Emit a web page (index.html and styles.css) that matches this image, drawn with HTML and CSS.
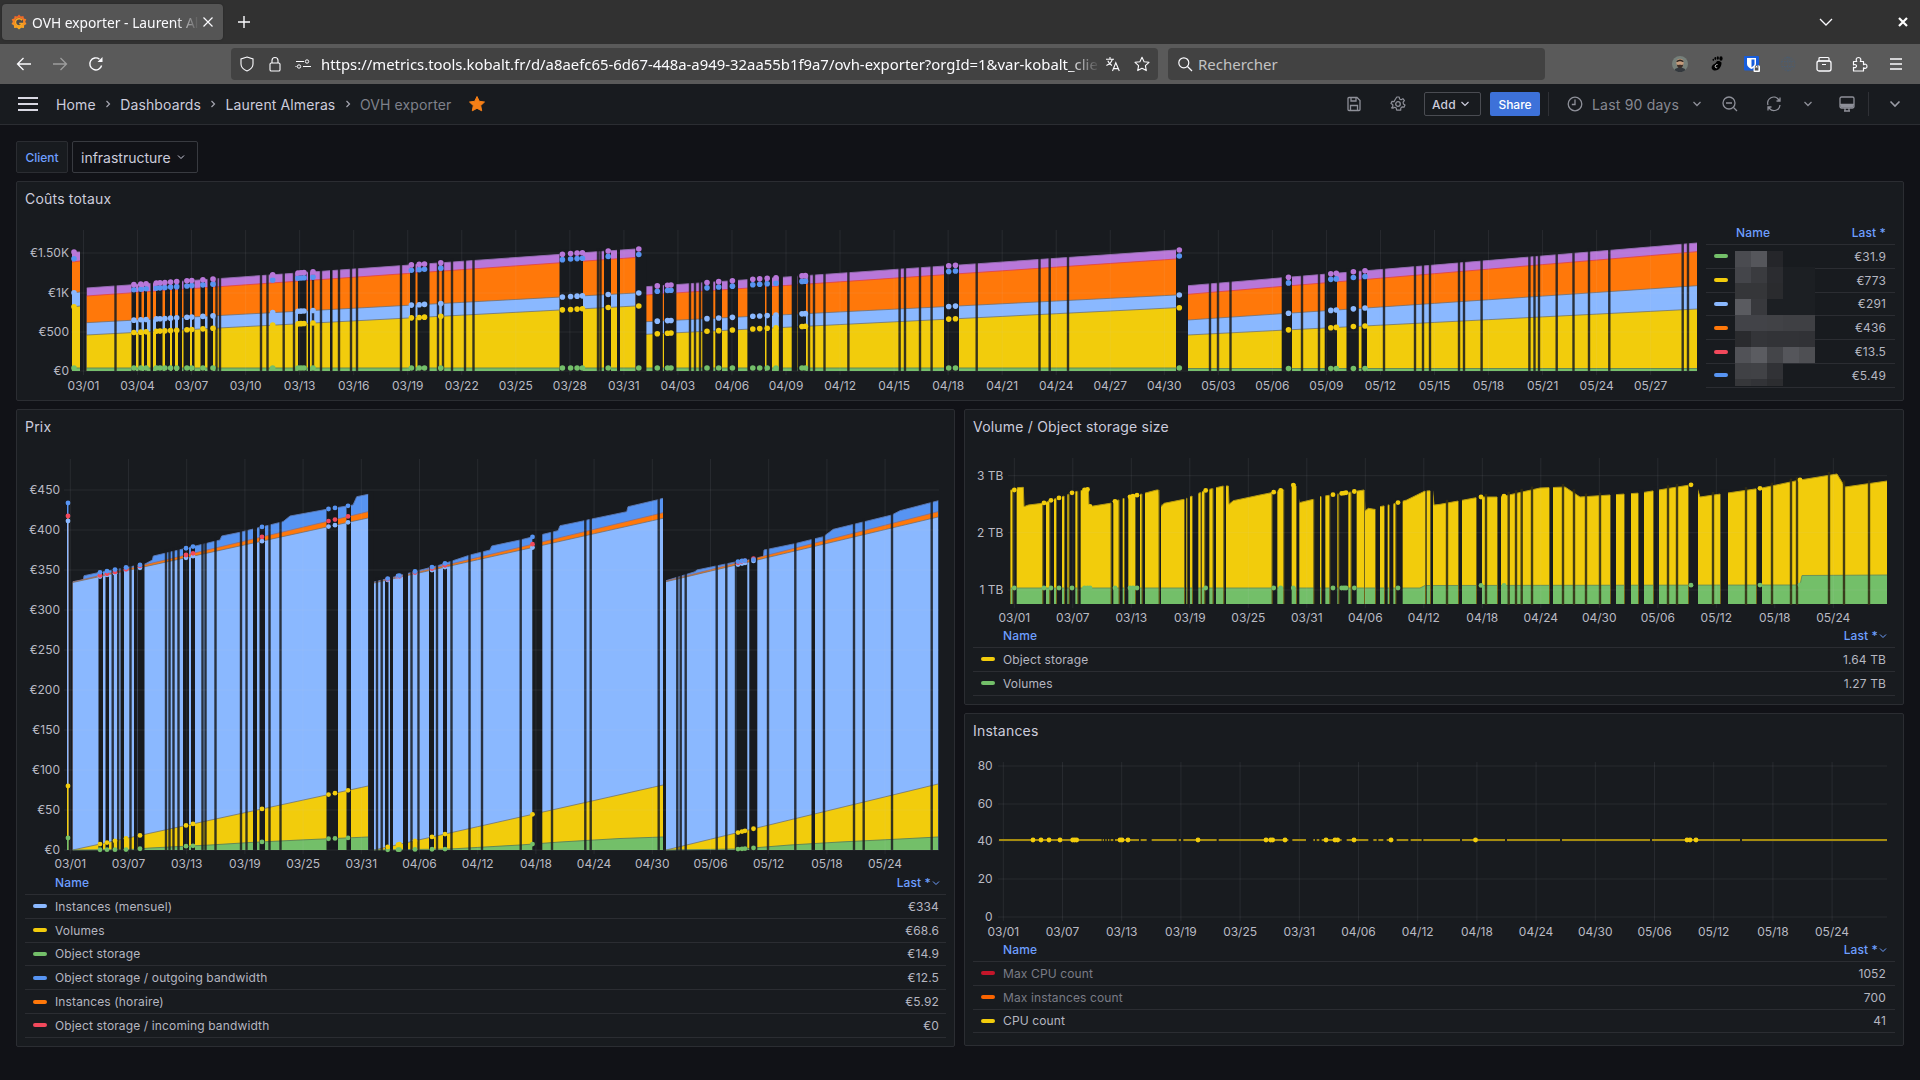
FILE: index.html
```html
<!DOCTYPE html>
<html lang="fr">
<head>
<meta charset="utf-8">
<title>OVH exporter - Laurent Almeras</title>
<link rel="stylesheet" href="styles.css">
</head>
<body>
<div class="tabbar">
  <div class="tab">
    <svg class="favicon" viewBox="0 0 16 16" width="16" height="16">
      <defs><linearGradient id="gf" x1="0" y1="1" x2="0" y2="0"><stop offset="0" stop-color="#fbb11f"/><stop offset="1" stop-color="#f05a28"/></linearGradient></defs>
      <polygon fill="url(#gf)" points="8,0.5 9.8,2.6 12.4,1.9 12.9,4.4 15.3,5.3 14.2,7.8 15.5,10 13.2,11.3 12.9,14 10.2,13.7 8,15.5 6,13.7 3.2,14 2.8,11.3 0.5,10 1.8,7.8 0.7,5.3 3.2,4.4 3.6,1.9 6.2,2.6"/>
      <circle cx="8" cy="8" r="4.2" fill="#4c4c4c"/>
      <path d="M11 6.2A3.6 3.6 0 1 0 11.4 9.6H8.2" fill="none" stroke="#f9a825" stroke-width="1.5"/>
    </svg>
    <span class="tab-title">OVH exporter - Laurent Al</span>
    <svg class="tab-close" viewBox="0 0 16 16" width="16" height="16"><path d="M3.5 3.5l9 9M12.5 3.5l-9 9" stroke="#fbfbfe" stroke-width="1.2" fill="none"/></svg>
  </div>
  <svg class="newtab" viewBox="0 0 16 16" width="16" height="16"><path d="M8 2v12M2 8h12" stroke="#fbfbfe" stroke-width="1.4" fill="none"/></svg>
  <div class="winctl">
    <svg viewBox="0 0 16 16" width="16" height="16"><path d="M2 5l6 6 6-6" stroke="#fbfbfe" stroke-width="1.3" fill="none"/></svg>
    <svg class="winclose" viewBox="0 0 16 16" width="16" height="16"><path d="M4 4l8 8M12 4l-8 8" stroke="#fff" stroke-width="2.2" fill="none"/></svg>
  </div>
</div>

<div class="toolbar">
  <span class="tb-cell"><svg viewBox="0 0 16 16" width="16" height="16"><path d="M15 8H1.5M7.5 2L1.5 8l6 6" stroke="#fbfbfe" stroke-width="1.3" fill="none"/></svg></span>
  <span class="tb-cell"><svg viewBox="0 0 16 16" width="16" height="16"><path d="M1 8h13.5M8.5 2l6 6-6 6" stroke="#9d9d9d" stroke-width="1.3" fill="none"/></svg></span>
  <span class="tb-cell"><svg viewBox="0 0 16 16" width="16" height="16"><path d="M13.6 9.5A6 6 0 1 1 11.5 3.2" stroke="#fbfbfe" stroke-width="1.4" fill="none"/><path d="M14.5 1v5h-5" fill="#fbfbfe"/></svg></span>
  <div class="urlbar">
    <span class="url-icon"><svg viewBox="0 0 16 16" width="16" height="16"><path d="M8 1l6 2v5c0 3.4-2.6 5.6-6 7-3.4-1.4-6-3.6-6-7V3z" stroke="#fbfbfe" stroke-width="1.1" fill="none"/></svg></span>
    <span class="url-icon"><svg viewBox="0 0 16 16" width="16" height="16"><rect x="3" y="7" width="10" height="8" rx="1.3" stroke="#fbfbfe" stroke-width="1.1" fill="none"/><path d="M5 7V4.5a3 3 0 0 1 6 0V7" stroke="#fbfbfe" stroke-width="1.1" fill="none"/></svg></span>
    <span class="url-icon"><svg viewBox="0 0 16 16" width="16" height="16"><path d="M1 5.5h8M1.5 10.5h-1M8 10.5h8" stroke="#fbfbfe" stroke-width="1.1" fill="none"/><circle cx="12" cy="5.5" r="1.7" stroke="#fbfbfe" fill="none"/><circle cx="4" cy="10.5" r="1.7" stroke="#fbfbfe" fill="none"/></svg></span>
    <span class="url-text">https://metrics.tools.kobalt.fr/d/a8aefc65-6d67-448a-a949-32aa55b1f9a7/ovh-exporter?orgId=1&amp;var-kobalt_clie</span>
    <span class="url-icon trans"><svg viewBox="0 0 16 16" width="16" height="16"><path d="M1 3.2h8M5 1v2.2M7.3 3.2C6.8 6 4.6 8.2 1.4 9.5M2.8 4.8c.8 2 2.2 3.6 4.2 4.7M7.5 15l3.3-8.3L14.3 15M8.6 12.6h4.6" stroke="#fbfbfe" stroke-width="1.1" fill="none"/></svg></span>
    <span class="url-icon star"><svg viewBox="0 0 16 16" width="16" height="16"><path d="M8 1.2l2.1 4.5 4.9.6-3.6 3.4.9 4.9L8 12.2l-4.3 2.4.9-4.9L1 6.3l4.9-.6z" stroke="#fbfbfe" stroke-width="1.1" fill="none" stroke-linejoin="round"/></svg></span>
  </div>
  <div class="searchbar">
    <svg viewBox="0 0 16 16" width="16" height="16"><circle cx="6.8" cy="6.8" r="5" stroke="#fbfbfe" stroke-width="1.2" fill="none"/><path d="M10.5 10.5l4.5 4.5" stroke="#fbfbfe" stroke-width="1.2"/></svg>
    <span>Rechercher</span>
  </div>
  <div class="ext-icons">
    <span class="tb-cell"><svg viewBox="0 0 16 16" width="16" height="16"><circle cx="8" cy="8" r="8" fill="#76807a"/><ellipse cx="8" cy="7" rx="3.6" ry="4.2" fill="#c59c7c"/><path d="M4.4 6c0-3.5 7.2-3.5 7.2 0l-1 .1c-1-1.2-4.2-1.2-5.2 0z" fill="#2b2522"/><path d="M4.8 8c.6 1 1 1 1.4.9.8-.3 2.8-.3 3.6 0 .4.1.8.1 1.4-.9-.2 3-1.6 4.4-3.2 4.4S5 11 4.8 8z" fill="#3a2e28"/><path d="M2.5 14c1-1.800 3-2.200 5.500-2.200s4.500.4 5.500 2.200a8 8 0 0 1-11 0z" fill="#33383d"/></svg></span>
    <span class="tb-cell"><svg viewBox="0 0 16 16" width="16" height="16"><path d="M13.500 6.500c.3 3.500-2.200 8-6.500 8-3 0-4-2.500-3-4.500 1-1.800 3.600-2.300 4.200-3.700.7-1.600 3-1.800 5.300.2z" fill="#000"/><ellipse cx="13" cy="2.500" rx="1.600" ry="2.300" fill="#000"/><ellipse cx="9.800" cy="2" rx="1.100" ry="1.800" fill="#000"/><ellipse cx="7.300" cy="2.500" rx=".9" ry="1.400" fill="#000"/><ellipse cx="5.300" cy="3.800" rx=".8" ry="1.100" fill="#000"/><path d="M9.500 8.500c-1.500 0-2.500 1-2.300 2.300.2 1 1.300 1.200 2 .7" stroke="#fff" stroke-width=".8" fill="none"/></svg></span>
    <span class="tb-cell"><svg viewBox="0 0 16 16" width="16" height="16"><rect width="15" height="14.500" rx="1" fill="#175ddc"/><path d="M3 2h9v6c0 2.500-2.500 4-4.500 5C5.500 12 3 10.500 3 8z" fill="#fff"/><path d="M7.500 3.500H10.500V8c0 1.300-1.500 2.400-3 3.200z" fill="#175ddc"/><rect x="9.500" y="9.500" width="6.500" height="6.500" rx="1" fill="#fff"/><path d="M11.300 11.500V10.800a1.300 1.300 0 0 1 2.600 0v.7" stroke="#555" fill="none"/><rect x="10.800" y="11.500" width="3.600" height="3" fill="#555"/></svg></span>
    <span class="tb-cell"><svg viewBox="0 0 16 16" width="16" height="16" class="globe"><circle cx="8" cy="8" r="6.800" stroke="#4c5d70" fill="none" stroke-dasharray="1.500 1"/><ellipse cx="8" cy="8" rx="3.200" ry="6.800" stroke="#4c5d70" fill="none" stroke-dasharray="1.500 1"/><path d="M1.500 5.500h13M1.500 10.500h13M8 1v14" stroke="#4c5d70" stroke-dasharray="1.500 1" fill="none"/></svg></span>
    <span class="tb-cell"><svg viewBox="0 0 16 16" width="16" height="16"><rect x="1" y="5" width="14" height="10" rx="2" stroke="#fbfbfe" stroke-width="1.300" fill="none"/><path d="M3 2.500a1 1 0 0 1 1-1h8a1 1 0 0 1 1 1V5H3zM6 8.500h4" stroke="#fbfbfe" stroke-width="1.200" fill="none"/></svg></span>
    <span class="tb-cell"><svg viewBox="0 0 16 16" width="16" height="16"><path d="M1.500 5.500h3.200c-1-1.300-.7-4 1.800-4s2.800 2.700 1.800 4h3.200v3.200c1.300-1 3.500-.7 3.500 1.500s-2.200 2.600-3.500 1.600v3.200H1.500v-3.700c1.600 1 3-.2 3-1.200s-1.400-2.200-3-1.200z" stroke="#fbfbfe" stroke-width="1.200" fill="none" stroke-linejoin="round"/></svg></span>
    <span class="tb-cell"><svg viewBox="0 0 16 16" width="16" height="16"><path d="M2 3h12M2 8h12M2 13h12" stroke="#fbfbfe" stroke-width="1.300" fill="none"/></svg></span>
  </div>
</div>

<nav class="gnav">
  <svg class="burger" viewBox="0 0 20 16" width="20" height="16"><path d="M0 2h20M0 8h20M0 14h20" stroke="#d8d8e2" stroke-width="2" fill="none"/></svg>
  <div class="crumbs">
    <span>Home</span><span class="sep"><svg viewBox="0 0 8 10" width="8" height="10"><path d="M2.500 2l3 3-3 3" stroke="#a5a6b0" stroke-width="1.200" fill="none"/></svg></span>
    <span>Dashboards</span><span class="sep"><svg viewBox="0 0 8 10" width="8" height="10"><path d="M2.500 2l3 3-3 3" stroke="#a5a6b0" stroke-width="1.200" fill="none"/></svg></span>
    <span>Laurent Almeras</span><span class="sep"><svg viewBox="0 0 8 10" width="8" height="10"><path d="M2.500 2l3 3-3 3" stroke="#a5a6b0" stroke-width="1.200" fill="none"/></svg></span>
    <span class="current">OVH exporter</span>
  </div>
  <svg class="fav" viewBox="0 0 16 16" width="16" height="16"><path d="M8 .5l2.300 4.800 5.200.7-3.800 3.600 1 5.200L8 12.300l-4.700 2.500 1-5.200L.5 6l5.200-.7z" fill="#f57f17" stroke="#f57f17" stroke-linejoin="round"/></svg>
  <div class="actions">
    <svg class="ic" viewBox="0 0 16 16" width="16" height="16"><path d="M2 2.500a1 1 0 0 1 1-1h8l3 3v9a1 1 0 0 1-1 1H3a1 1 0 0 1-1-1zM5 1.500v3.500h5V1.500M4.500 14.500v-5h7v5" stroke="#8e9099" stroke-width="1.300" fill="none"/></svg>
    <svg class="ic gear" viewBox="0 0 16 16" width="16" height="16"><circle cx="8" cy="8" r="2.300" stroke="#8e9099" stroke-width="1.300" fill="none"/><path d="M6.800 1h2.400l.4 2 1.500.7 1.800-1 1.500 2-1.300 1.500.3 1.800 1.600 1-1 2.200-2-.3-1.200 1.200-.1 2H6.700l-.5-2-1.400-.8-1.900.8L1.600 11.900l1.300-1.500-.2-1.900-1.700-1 1-2.200 2 .3L5.200 3.500z" stroke="#8e9099" stroke-width="1.200" fill="none" stroke-linejoin="round"/></svg>
    <button class="btn-add">Add<svg viewBox="0 0 10 10" width="10" height="10"><path d="M1.500 3l3.500 3.500L8.500 3" stroke="#ccccdc" stroke-width="1.200" fill="none"/></svg></button>
    <button class="btn-share">Share</button>
    <span class="vline v1"></span>
    <svg class="ic clock" viewBox="0 0 16 16" width="16" height="16"><circle cx="8" cy="8" r="6.800" stroke="#8e9099" stroke-width="1.300" fill="none"/><path d="M8 3.500V8.500H4.800" stroke="#8e9099" stroke-width="1.300" fill="none"/></svg>
    <span class="range">Last 90 days</span>
    <svg class="ch c1" viewBox="0 0 10 10" width="10" height="10"><path d="M1.500 3l3.500 3.500L8.500 3" stroke="#8e9099" stroke-width="1.300" fill="none"/></svg>
    <svg class="ic zoom" viewBox="0 0 16 16" width="16" height="16"><circle cx="7" cy="7" r="6" stroke="#8e9099" stroke-width="1.300" fill="none"/><path d="M4 7h6M11.500 11.500l3.500 3.500" stroke="#8e9099" stroke-width="1.300" fill="none"/></svg>
    <svg class="ic refresh" viewBox="0 0 16 16" width="16" height="16"><path d="M2 9a6 6 0 0 1 10.500-5.500L14 5M14 9a6 6 0 0 1-10.500 3.500L2 11M14 1.500V5h-3.500M2 14.500V11h3.500" stroke="#8e9099" stroke-width="1.300" fill="none"/></svg>
    <svg class="ch c2" viewBox="0 0 10 10" width="10" height="10"><path d="M1.500 3l3.500 3.500L8.500 3" stroke="#8e9099" stroke-width="1.300" fill="none"/></svg>
    <svg class="ic monitor" viewBox="0 0 16 16" width="16" height="16"><rect x="1" y="1" width="14" height="11" rx="1.500" stroke="#8e9099" stroke-width="1.300" fill="none"/><path d="M1 8.500h14M5 15h6M6 12v3M10 12v3" stroke="#8e9099" stroke-width="1.300" fill="none"/><rect x="1.500" y="8.500" width="13" height="3" fill="#8e9099"/></svg>
    <span class="vline v2"></span>
    <svg class="ch c3" viewBox="0 0 12 12" width="12" height="12"><path d="M1.500 3.500L6 8l4.500-4.500" stroke="#9a9ca5" stroke-width="1.600" fill="none"/></svg>
  </div>
</nav>

<main class="dash">
  <div class="vars">
    <label class="var-label">Client</label>
    <div class="var-select">infrastructure<svg viewBox="0 0 10 10" width="10" height="10"><path d="M2 3.500l3 3 3-3" stroke="#ccccdc" fill="none"/></svg></div>
  </div>

  <section class="panel p-total">
    <h2 class="ptitle">Coûts totaux</h2>
    <div class="total-body">
      <div class="viz" data-chart="total"></div>
      <div class="legend side">
        <div class="lhead"><span class="lname">Name</span><span class="llast">Last *</span></div>
        <div class="lrow"><i class="sw green"></i><span class="lbl"></span><span class="val">€31.9</span></div>
        <div class="lrow"><i class="sw yellow"></i><span class="lbl"></span><span class="val">€773</span></div>
        <div class="lrow"><i class="sw sky"></i><span class="lbl"></span><span class="val">€291</span></div>
        <div class="lrow"><i class="sw orange"></i><span class="lbl"></span><span class="val">€436</span></div>
        <div class="lrow"><i class="sw red"></i><span class="lbl"></span><span class="val">€13.5</span></div>
        <div class="lrow"><i class="sw blue"></i><span class="lbl"></span><span class="val">€5.49</span></div>
        <svg class="mosaic" data-mosaic viewBox="0 0 80 135" width="80" height="135"></svg>
      </div>
    </div>
  </section>

  <div class="row">
    <section class="panel p-prix">
      <h2 class="ptitle">Prix</h2>
      <div class="viz" data-chart="prix"></div>
      <div class="legend">
        <div class="lhead"><span class="lname">Name</span><span class="llast">Last *<svg viewBox="0 0 10 10" width="10" height="10"><path d="M2 3.500l3 3 3-3" stroke="#6e9fff" fill="none"/></svg></span></div>
        <div class="lrow"><i class="sw sky"></i><span class="lbl">Instances (mensuel)</span><span class="val">€334</span></div>
        <div class="lrow"><i class="sw yellow"></i><span class="lbl">Volumes</span><span class="val">€68.6</span></div>
        <div class="lrow"><i class="sw green"></i><span class="lbl">Object storage</span><span class="val">€14.9</span></div>
        <div class="lrow"><i class="sw blue"></i><span class="lbl">Object storage / outgoing bandwidth</span><span class="val">€12.5</span></div>
        <div class="lrow"><i class="sw orange"></i><span class="lbl">Instances (horaire)</span><span class="val">€5.92</span></div>
        <div class="lrow"><i class="sw red"></i><span class="lbl">Object storage / incoming bandwidth</span><span class="val">€0</span></div>
      </div>
    </section>
    <div class="col">
      <section class="panel p-vol">
        <h2 class="ptitle">Volume / Object storage size</h2>
        <div class="viz" data-chart="vol"></div>
        <div class="legend">
          <div class="lhead"><span class="lname">Name</span><span class="llast">Last *<svg viewBox="0 0 10 10" width="10" height="10"><path d="M2 3.500l3 3 3-3" stroke="#6e9fff" fill="none"/></svg></span></div>
          <div class="lrow"><i class="sw yellow"></i><span class="lbl">Object storage</span><span class="val">1.64 TB</span></div>
          <div class="lrow"><i class="sw green"></i><span class="lbl">Volumes</span><span class="val">1.27 TB</span></div>
        </div>
      </section>
      <section class="panel p-inst">
        <h2 class="ptitle">Instances</h2>
        <div class="viz" data-chart="inst"></div>
        <div class="legend">
          <div class="lhead"><span class="lname">Name</span><span class="llast">Last *<svg viewBox="0 0 10 10" width="10" height="10"><path d="M2 3.500l3 3 3-3" stroke="#6e9fff" fill="none"/></svg></span></div>
          <div class="lrow dim"><i class="sw crimson"></i><span class="lbl">Max CPU count</span><span class="val">1052</span></div>
          <div class="lrow dim"><i class="sw redorange"></i><span class="lbl">Max instances count</span><span class="val">700</span></div>
          <div class="lrow"><i class="sw yellow"></i><span class="lbl">CPU count</span><span class="val">41</span></div>
        </div>
      </section>
    </div>
  </div>
</main>
<script src="chart.js"></script>
</body>
</html>
```
FILE: styles.css
```css
* { box-sizing: border-box; }
html, body { margin: 0; height: 1080px; overflow: hidden; }
body { background: #111217; font-family: Inter, "Liberation Sans", sans-serif; color: #ccccdc; }
svg { display: block; flex: none; }

.tabbar { height: 44px; background: #313131; display: flex; align-items: center; padding-left: 2px; font-family: "Noto Sans", sans-serif; }
.tab { width: 221px; height: 36px; background: #555; border-radius: 4px; display: flex; align-items: center; padding-left: 9px; position: relative; box-shadow: 0 0 2px rgba(0,0,0,.3); }
.tab-title { margin-left: 5px; width: 167px; font-size: 13.8px; white-space: nowrap; color: #fbfbfe; -webkit-mask-image: linear-gradient(to right, #000 86%, transparent); mask-image: linear-gradient(to right, #000 86%, transparent); }
.tab-close { margin-left: 1px; }
.newtab { margin-left: 13px; }
.winctl { margin-left: auto; display: flex; align-items: center; padding-right: 9px; }
.winclose { margin-left: 61px; }

.toolbar { height: 40px; background: #5a5a5a; display: flex; align-items: center; padding-left: 6px; font-family: "Noto Sans", sans-serif; }
.tb-cell { width: 36px; height: 32px; display: flex; align-items: center; justify-content: center; }
.urlbar { margin-left: 117px; width: 927px; height: 32px; background: #424242; border-radius: 4px; display: flex; align-items: center; padding-left: 2px; }
.url-icon { width: 28px; height: 32px; display: flex; align-items: center; justify-content: center; flex: none; }
.url-text { margin-left: 4px; width: 779px; flex: none; font-size: 14.88px; white-space: nowrap; color: #fbfbfe; -webkit-mask-image: linear-gradient(to right, #000 96%, transparent); mask-image: linear-gradient(to right, #000 96%, transparent); }
.url-icon.trans { margin-left: -1px; }
.url-icon.star { margin-left: 1px; }
.searchbar { margin-left: 10px; width: 377px; height: 32px; background: #424242; border-radius: 4px; display: flex; align-items: center; padding-left: 9px; gap: 5px; font-size: 15px; color: #c3c3c3; }
.ext-icons { margin-left: 117px; display: flex; }

.gnav { height: 41px; background: #181b1f; border-bottom: 1px solid #2b2d32; display: flex; align-items: center; padding-left: 18px; font-size: 14px; color: #ccccdc; }
.crumbs { margin-left: 18px; display: flex; align-items: center; letter-spacing: .12px; }
.crumbs .sep { width: 24.5px; display: flex; justify-content: center; }
.crumbs .current { color: #7f818b; }
.fav { margin-left: 18px; }
.actions { position: relative; margin-left: auto; display: flex; align-items: center; padding-right: 19px; }
.gear { margin-left: 28px; }
.btn-add { margin-left: 18px; width: 57px; height: 24px; background: transparent; border: 1px solid #4a4c52; border-radius: 2px; color: #ccccdc; font: 500 12px Inter, sans-serif; letter-spacing: .15px; display: flex; align-items: center; gap: 4px; padding: 0 0 0 7px; }
.btn-share { margin-left: 9px; width: 50px; height: 24px; background: #3d71d9; border: 0; border-radius: 2px; color: #fff; font: 500 12px Inter, sans-serif; padding: 0; }
.vline { width: 1px; height: 24px; background: #2f3136; }
.v1 { margin-left: 8px; }
.clock { margin-left: 18px; }
.range { margin-left: 9px; width: 88px; white-space: nowrap; color: #868891; font-size: 14px; letter-spacing: .2px; }
.c1 { margin-left: 12px; }
.zoom { margin-left: 20px; }
.refresh { margin-left: 28px; }
.c2 { margin-left: 21px; }
.monitor { margin-left: 26px; }
.v2 { margin-left: 13px; }
.c3 { margin-left: 20px; }

.dash { padding: 16px 16px 0; }
.vars { display: flex; gap: 4px; height: 32px; margin-bottom: 8px; }
.var-label { width: 52px; background: #181b1f; border: 1px solid #2b2d32; border-radius: 2px; font-size: 12px; font-weight: 500; color: #6e9fff; display: flex; align-items: center; justify-content: center; }
.var-select { width: 126px; border: 1px solid #383a40; border-radius: 2px; font-size: 14px; display: flex; align-items: center; padding-left: 8px; gap: 5px; }

.panel { background: #181b1f; border: 1px solid #2b2d32; border-radius: 2px; }
.ptitle { margin: 0; height: 33px; padding-left: 8px; font-size: 14px; font-weight: 400; line-height: 34px; letter-spacing: .2px; color: #ccccdc; }
.p-total { height: 220px; margin-bottom: 8px; }
.total-body { display: flex; padding-right: 8px; }
.row { display: grid; grid-template-columns: 939px 940px; column-gap: 9px; }
.p-prix { height: 638px; }
.col { display: flex; flex-direction: column; gap: 8px; }
.p-vol { height: 296px; }
.p-inst { height: 333px; }

.axis { font: 12px Inter, sans-serif; fill: #b9bac3; }

.legend { margin: 0 8px; font-size: 12px; letter-spacing: .13px; position: relative; }
.legend.side { margin: 7px 0 0 4px; width: 189px; flex: none; }
.lhead { height: 23px; display: flex; justify-content: space-between; align-items: center; padding: 0 7px 1px 30px; color: #6e9fff; font-weight: 500; border-bottom: 1px solid #2b2d32; }
.llast { display: flex; align-items: center; }
.side .lhead { padding-right: 9px; }
.lrow { height: 23.8px; display: flex; align-items: center; border-bottom: 1px solid #2b2d32; padding: 0 9px 0 8px; color: #b5b6c0; }
.p-prix .lhead { padding-right: 5px; }
.p-prix .lrow { padding-right: 7px; }
.lrow.dim .lbl { color: #7a7c86; }
.lbl { flex: 1; margin-left: 8px; }
.val { color: #b5b6c0; }
.sw { width: 14px; height: 4px; border-radius: 2px; }
.green { background: #73bf69; }
.yellow { background: #f2cc0c; }
.sky { background: #8ab8ff; }
.orange { background: #ff780a; }
.red { background: #f2495c; }
.blue { background: #5794f2; }
.crimson { background: #c4162a; }
.redorange { background: #fa6400; }
.mosaic { position: absolute; left: 29px; top: 29px; }
```
FILE: chart.js
```js
(function () {
  var NS = 'http://www.w3.org/2000/svg';
  var C = { green: '#73bf69', yellow: '#f2cc0c', sky: '#8ab8ff', orange: '#ff780a', red: '#f2495c', blue: '#5794f2', purple: '#b877d9' };
  var BG = '#181b1f';

  function el(parent, tag, attrs, text) {
    var n = document.createElementNS(NS, tag);
    for (var k in attrs) n.setAttribute(k, attrs[k]);
    if (text !== undefined) n.textContent = text;
    parent.appendChild(n);
    return n;
  }

  function dates(list) { return list.split(' '); }
  var D3 = dates('03/01 03/04 03/07 03/10 03/13 03/16 03/19 03/22 03/25 03/28 03/31 04/03 04/06 04/09 04/12 04/15 04/18 04/21 04/24 04/27 04/30 05/03 05/06 05/09 05/12 05/15 05/18 05/21 05/24 05/27');
  var D6 = dates('03/01 03/07 03/13 03/19 03/25 03/31 04/06 04/12 04/18 04/24 04/30 05/06 05/12 05/18 05/24');

  function topAt(band, x) {
    var best = null, bestDist = 1e9;
    band.segs.forEach(function (pts) {
      var a = pts[0][0], b = pts[pts.length - 1][0];
      var d = x < a ? a - x : x > b ? x - b : 0;
      if (d < bestDist) { bestDist = d; best = pts; }
    });
    var p = best;
    if (x <= p[0][0]) return p[0][1];
    for (var i = 1; i < p.length; i++) {
      if (x <= p[i][0]) {
        var t = (x - p[i - 1][0]) / (p[i][0] - p[i - 1][0]);
        return p[i - 1][1] + t * (p[i][1] - p[i - 1][1]);
      }
    }
    return p[p.length - 1][1];
  }

  function draw(cfg) {
    var host = document.querySelector('[data-chart="' + cfg.id + '"]');
    var svg = el(host, 'svg', { width: cfg.w, height: cfg.h, viewBox: cfg.x + ' ' + cfg.y + ' ' + cfg.w + ' ' + cfg.h });
    var base = cfg.base;
    var bands = cfg.bands || [];

    for (var i = bands.length - 1; i >= 0; i--) {
      bands[i].segs.forEach(function (pts, idx) {
        var s = pts.map(function (p) { return p[0] + ',' + p[1]; }).join(' ');
        var a = pts[0][0], b = pts[pts.length - 1][0];
        el(svg, 'polygon', { points: a + ',' + base + ' ' + s + ' ' + b + ',' + base, fill: bands[this.i].color });
        el(svg, 'polyline', { points: s, fill: 'none', stroke: bands[this.i].line || 'rgba(110,110,110,.75)', 'stroke-width': 1 });
      }, { i: i });
    }

    var topBand = bands[bands.length - 1];
    (cfg.gaps || []).forEach(function (g) {
      var a = Array.isArray(g) ? g[0] : g - 1.2;
      var b = Array.isArray(g) ? g[1] : g + 1.2;
      var y = Math.min(topAt(topBand, a), topAt(topBand, b)) - 3;
      var thin = !Array.isArray(g);
      el(svg, 'rect', { x: a, y: y, width: b - a, height: base - y + 1, fill: thin ? (cfg.thin || 'rgba(24,27,31,.86)') : BG });
      if (!thin && cfg.edge) {
        el(svg, 'rect', { x: a, y: topAt(topBand, a), width: 1, height: base - topAt(topBand, a), fill: cfg.edge });
      }
    });

    var gridStroke = 'rgba(204,204,220,.085)';
    cfg.yticks.forEach(function (t) {
      el(svg, 'line', { x1: cfg.gridL, x2: cfg.gridR, y1: t[1], y2: t[1], stroke: gridStroke });
    });
    cfg.labels.forEach(function (lab, k) {
      var x = cfg.x0 + k * cfg.step;
      el(svg, 'line', { x1: x, x2: x, y1: cfg.gridT, y2: cfg.gridB, stroke: gridStroke });
    });

    if (cfg.line) {
      el(svg, 'line', { x1: cfg.line.a, x2: cfg.line.b, y1: cfg.line.y, y2: cfg.line.y, stroke: '#a68c10', 'stroke-width': 2 });
      cfg.line.breaks.forEach(function (b) {
        el(svg, 'rect', { x: b[0], y: cfg.line.y - 2, width: b[1] - b[0], height: 4, fill: BG });
      });
      cfg.line.dots.forEach(function (x) {
        el(svg, 'circle', { cx: x, cy: cfg.line.y, r: 2.4, fill: C.yellow });
      });
    }

    (cfg.dots || []).forEach(function (x) {
      bands.forEach(function (b) {
        if (b.noDot) return;
        el(svg, 'circle', { cx: x, cy: topAt(b, x) + (b.dotOff || 0), r: cfg.dotR || 2.4, fill: b.dot || b.color });
      });
    });

    cfg.yticks.forEach(function (t) {
      el(svg, 'text', { x: cfg.yLabelR, y: t[1] + 4, 'text-anchor': 'end', class: 'axis' }, t[0]);
    });
    cfg.labels.forEach(function (lab, k) {
      el(svg, 'text', { x: cfg.x0 + k * cfg.step, y: cfg.xLabelY, 'text-anchor': 'middle', class: 'axis' }, lab);
    });
  }

  /* ---- Coûts totaux ---- */
  draw({
    id: 'total', x: 17, y: 215, w: 1685, h: 180, base: 371, dotR: 2.8,
    x0: 83.5, step: 54.04, labels: D3.slice(0, 30),
    gridL: 71, gridR: 1697, gridT: 230, gridB: 375, yLabelR: 69, xLabelY: 390,
    yticks: [['€1.50K', 253], ['€1K', 293], ['€500', 332], ['€0', 371]],
    bands: [
      { color: C.green, line: 'rgba(90,130,90,.9)', segs: [[[72, 368], [80, 368]], [[86.5, 368], [635.5, 368]], [[646, 368], [1176, 368]], [[1188, 368.500], [1697, 368.500]]] },
      { color: C.yellow, segs: [[[72, 307], [80, 306]], [[86.5, 335], [635.5, 306]], [[646, 334.300], [1176, 307.700]], [[1188, 335], [1697, 309]]] },
      { color: C.sky, segs: [[[72, 293], [80, 292]], [[86.5, 322.700], [635.5, 293]], [[646, 321.700], [1176, 295]], [[1188, 320], [1697, 285.700]]] },
      { color: C.orange, dot: C.blue, dotOff: -3, line: 'rgba(226,70,70,.9)', segs: [[[72, 262], [80, 261]], [[86.5, 296], [635.5, 257.500]], [[646, 295], [1176, 259]], [[1188, 294.300], [1697, 251.700]]] },
      { color: C.purple, line: 'rgba(150,110,180,.9)', segs: [[[72, 252], [80, 252]], [[86.5, 288], [635.5, 249]], [[646, 286.700], [1176, 250]], [[1188, 285.700], [1697, 243]]] }
    ],
    gaps: [[80.4, 86.5], 115.5, [131.5, 136], [138.5, 141.5], [144, 147], [150.5, 153], [156, 162.5], [165, 170], [172, 175], [178, 182], [183.5, 190], [192, 194.5], [200.5, 205], [207.5, 213], 216.5, 220,
      261, 267.5, 283.7, 294, [298, 306.5], [308, 310], 313, 321, [330, 332.5], 339, 351, 357, 401, [410, 415.5], [417.5, 429.5], 438, 443, 452, 465, 473.5, [559.5, 583], 598, 600.5, [604, 611], [617, 620],
      [635.5, 646.4], [652.5, 662.8], [664, 676.4], 690, 695, 700, [702.3, 713.3], [715.3, 722], [727.6, 738], [747.4, 765], [766.5, 772], [778.8, 782.9], [791.7, 797.2], [797.5, 806], 809, 814, 824.5, 848.4, 899.6, 905, 920, 931.6, [944, 959], 976.7, 1039.5, 1049.7, 1068, [1176, 1188],
      1210, 1218, 1230.5, [1281.7, 1292], 1302, 1319, [1324.7, 1337], [1346.5, 1358.8], [1361.5, 1367], 1384, 1415, 1423, 1430, 1459, 1464, 1481.6, 1529.4, 1534.5, 1539, 1556.7, 1573.5, 1589, 1609.3, 1682.7, 1688],
    dots: [74, 133.9, 140.8, 146.1, 156.3, 160, 164.9, 170.6, 176.7, 186.9, 191.8, 202.9, 213, 272.7, 298, 301, 304, 313, 411.4, 419.2, 424.5, 440.8, 562.4, 570.6, 577.1, 582.4, 608.2, 638.8, 657.3, 667.5, 671, 707, 718.7, 732.4, 752.8, 759.7, 767.2, 776, 802, 805.4, 948.7, 955.5, 1179.3, 1288.5, 1330.8, 1336.3, 1353.4, 1365]
  });

  /* ---- Prix ---- */
  draw({
    id: 'prix', x: 17, y: 443, w: 937, h: 429, base: 850,
    x0: 70.3, step: 58.2, labels: D6,
    gridL: 64, gridR: 939, gridT: 459, gridB: 854, yLabelR: 60, xLabelY: 868,
    yticks: [['€450', 490], ['€400', 530], ['€350', 570], ['€300', 610], ['€250', 650], ['€200', 690], ['€150', 730], ['€100', 770], ['€50', 810], ['€0', 850]],
    bands: [
      { color: C.green, line: 'rgba(90,130,90,.9)', segs: [[[67, 838], [68.7, 838]], [[72.5, 850], [130, 849.5], [150, 848], [210, 845], [250, 842.5], [300, 840], [368, 837]], [[374, 850], [450, 849], [520, 845], [560, 842], [620, 838.5], [663, 837]], [[666, 850], [740, 849], [790, 845], [840, 842], [900, 839], [938, 837]]] },
      { color: C.yellow, segs: [[[67, 786], [68.7, 786]], [[72.5, 850], [368, 786]], [[374, 850], [663, 785]], [[666, 850], [938, 784]]] },
      { color: C.sky, segs: [[[67, 521], [68.7, 521]], [[72.5, 582.5], [368, 518]], [[374, 583], [663, 518.3]], [[666, 581.7], [938, 517]]] },
      { color: C.orange, dot: C.red, line: 'rgba(140,110,130,.8)', segs: [[[67, 516], [68.7, 516]], [[72.5, 582], [368, 511.7]], [[374, 582.5], [663, 512.7]], [[666, 581], [938, 511.7]]] },
      { color: C.blue, line: 'rgba(90,120,180,.9)', segs: [[[67, 503], [68.7, 503]], [[72.7, 581.7], [83.3, 580], [84, 575.7], [98, 572.7], [145, 564], [152.3, 560], [153.3, 556], [165, 553.3], [206.7, 543.3], [220, 540], [221.7, 536], [240, 532.3], [283, 521.7], [290, 516], [326.7, 509.3], [353, 505], [356.7, 496.7], [368.3, 494.3]],
        [[374, 582], [400, 575.5], [413, 572], [440, 565], [470, 555], [490, 550], [491.7, 546], [520, 540], [543, 534.3], [558, 530.7], [560, 525.7], [583, 521], [591.7, 519], [626.7, 511.7], [628, 506.7], [656.7, 500], [663, 498.3]],
        [[666, 580.7], [695, 571.7], [696.7, 570], [736.7, 561.7], [763.3, 558.3], [764, 550], [793.3, 544], [823.3, 536.7], [833.3, 529.3], [891.7, 515], [900, 510.7], [938.3, 500.7]]] }
    ],
    gaps: [[68.7, 72.5], [98.5, 103], [105.5, 109], 112.7, 118.2, [120.5, 124], 130.5, [134, 137.5], [137.5, 144.5], 166, 169.5, 173.5, 178.5, [183, 189], [191, 195], 202.5, 205.5, 215.5, 241, 246.5, [253, 257], [259.5, 265], 269.5, 280.5, [326.5, 338], [346.5, 351],
      [368.5, 373.5], 377, 381.7, [385, 388.5], [390, 393], [403, 408], 411.5, 418.5, [429, 434], 437, [443, 447], 451.5, 469.5, 482, 520.7, [532.3, 542.3], 552, 585.3, 590.7, 658.7, [663.7, 665.7], 677.3, 680.7, 685.7, 716.7, 726.3, 736, [737, 747.3], [749.3, 757.3], 768, 795.3, [811.5, 815], 824, 854, 863.7, 892, 931.7],
    dots: [68, 100, 107, 115, 126, 140, 186, 193, 262, 328.5, 335, 348, 387.7, 398, 399.5, 415, 432, 445, 532.5, 738, 742, 745, 753.5]
  });

  /* ---- Volume / Object storage size ---- */
  function z8(list) { return list.map(function (p) { return [960 + p[0] / 3, 410 + p[1] / 3]; }); }
  var yellowTop = z8([[150, 240], [170, 240], [172, 233], [190, 232], [192, 290], [205, 285], [247, 280], [258, 277], [280, 268], [300, 263], [320, 255], [345, 245], [385, 238], [387, 290], [450, 280], [475, 270], [500, 263], [545, 252], [590, 240], [596, 240], [603, 290], [612, 280], [672, 268], [740, 240], [790, 228], [805, 228], [807, 283], [820, 272], [900, 255], [935, 248], [985, 235], [1005, 222], [1009, 230], [1018, 278], [1060, 268], [1080, 260], [1160, 248], [1212, 240], [1215, 303], [1225, 295], [1243, 298], [1260, 290], [1300, 282], [1340, 270], [1395, 243], [1418, 242], [1422, 285], [1440, 283]])
    .concat([[1480, 497], [1500, 497], [1540, 488], [1565, 487], [1580, 497], [1640, 493], [1696, 484], [1700, 497], [1762, 488], [1800, 480], [1837, 474], [1845, 487], [1887, 481]]);
  var volGaps = [[150, 152], [157, 170], [247, 258], [268, 282], [288, 306], [312, 322], [326, 346], [352, 362], [452, 460], [476, 488], [492, 505], [525, 540], [545, 555], [596, 603], [672, 678], [680, 690], [696, 715], [722, 726], [733, 748], [758, 768], [790, 798], [935, 952], [970, 995], [1008, 1018], [1060, 1080], [1083, 1096], [1108, 1132], [1135, 1165], [1172, 1190], [1212, 1215], [1245, 1260], [1272, 1283], [1287, 1300], [1306, 1328], [1395, 1400]]
    .map(function (g) { return [960 + g[0] / 3, 960 + g[1] / 3]; })
    .concat([[1430, 1433], 1447, [1458, 1462], [1476, 1482], 1486, [1497, 1501], 1508.7, 1516, 1521.7, 1532, [1549, 1553], 1563, 1574, 1586, 1600, [1610, 1616], [1624, 1631], [1638, 1644], [1653, 1659], 1668, 1677, [1688, 1698], 1713, [1720, 1728], 1746, [1756, 1762], 1772, 1791, 1797, 1829, 1844, 1869]);
  draw({
    id: 'vol', x: 965, y: 443, w: 938, h: 182, base: 604,
    x0: 1014.3, step: 58.5, labels: D6,
    gridL: 1008, gridR: 1887, gridT: 458, gridB: 608, yLabelR: 1003.3, xLabelY: 622,
    yticks: [['3 TB', 475.7], ['2 TB', 532.7], ['1 TB', 590]],
    thin: 'rgba(50,45,20,.9)', edge: 'rgba(242,204,12,.4)',
    bands: [
      { color: C.green, line: 'rgba(100,140,90,.9)', segs: [[[1010, 588], [1420, 588], [1425, 585.5], [1800, 585], [1802, 575.5], [1887, 575]]] },
      { color: C.yellow, line: '#b59a10', segs: [yellowTop] }
    ],
    gaps: volGaps,
    dots: [1014.3, 1044, 1051, 1059, 1072, 1084.5, 1087.5, 1090, 1115, 1130, 1133, 1137, 1205.7, 1273.7, 1280.7, 1293.3, 1333, 1341.7, 1344, 1346, 1354.3, 1398, 1481, 1504, 1691, 1760, 1800]
  });

  /* ---- Instances ---- */
  var instDots = [219, 243, 267, 300, 338, 344, 350, 480, 486, 504, 714, 918, 932, 938, 975, 1098, 1125, 1133, 1182, 1293].map(function (z) { return 960 + z / 3; })
    .concat([1475.5, 1687, 1690, 1696]);
  var instBreaks = [[425, 428], [432, 436], [440, 444], [448, 452], [460, 465], [537, 542], [560, 575], [650, 656], [663, 670], [770, 776], [985, 997], [1038, 1060], [1065, 1070], [1078, 1085], [1145, 1160], [1225, 1240], [1250, 1255], [1270, 1280], [1300, 1310], [1345, 1352], [1385, 1390]]
    .map(function (b) { return [960 + b[0] / 3, 960 + b[1] / 3]; })
    .concat([[1460, 1462], [1505, 1507], [1560, 1562], [1650, 1652], [1740, 1742]]);
  draw({
    id: 'inst', x: 965, y: 747, w: 938, h: 192, base: 917,
    x0: 1003.3, step: 59.2, labels: D6,
    gridL: 998, gridR: 1887, gridT: 762, gridB: 921, yLabelR: 992.7, xLabelY: 936,
    yticks: [['80', 766], ['60', 804], ['40', 841], ['20', 879], ['0', 917]],
    line: { a: 999, b: 1887, y: 840, breaks: instBreaks, dots: instDots }
  });

  /* ---- Pixelated (redacted) legend names ---- */
  var mosaic = document.querySelector('[data-mosaic]');
  var cells = [
    ['#4a4b50', '#55565b', '#25262a'],
    ['#44454a', '#3a3b3f', '#2b2c30', '#1c1f23', '#1c1f23', '#1c1f23'],
    ['#353639', '#353639', '#2a2b2e', '#1c1f23', '#1c1f23', '#1c1f23'],
    ['#5a5b60', '#38393d', '#1c1f23', '#1c1f23', '#1c1f23', '#1c1f23'],
    ['#424348', '#424348', '#414246', '#3f4044', '#3f4044', '#1c1f23'],
    ['#2a2b2e', '#343539', '#323337', '#323337', '#313236', '#1c1f23'],
    ['#515257', '#5b5c61', '#444549', '#55565b', '#4e4f53', '#1c1f23'],
    ['#404145', '#414246', '#313236'],
    ['#36373a', '#323337', '#2c2d30']
  ];
  cells.forEach(function (row, r) {
    row.forEach(function (c, k) {
      el(mosaic, 'rect', { x: k * 16, y: r * 16, width: 16, height: r === 8 ? 7 : 16, fill: c });
    });
  });
})();
```
